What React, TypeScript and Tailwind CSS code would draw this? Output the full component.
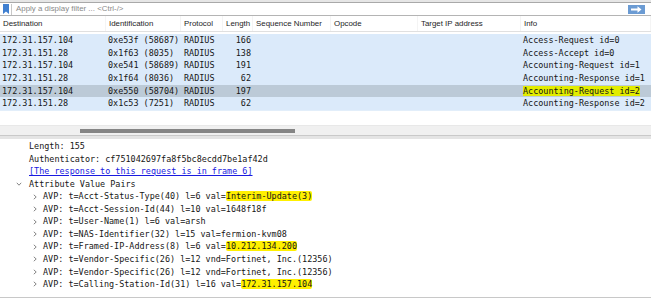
import React from 'react'

type Pkt = { dst: string; ident: string; len: string; info: string; selected?: boolean }

const packets: Pkt[] = [
  { dst: '172.31.157.104', ident: '0xe53f (58687)', len: '166', info: 'Access-Request id=0' },
  { dst: '172.31.151.28', ident: '0x1f63 (8035)', len: '138', info: 'Access-Accept id=0' },
  { dst: '172.31.157.104', ident: '0xe541 (58689)', len: '191', info: 'Accounting-Request id=1' },
  { dst: '172.31.151.28', ident: '0x1f64 (8036)', len: '62', info: 'Accounting-Response id=1' },
  { dst: '172.31.157.104', ident: '0xe550 (58704)', len: '197', info: 'Accounting-Request id=2', selected: true },
  { dst: '172.31.151.28', ident: '0x1c53 (7251)', len: '62', info: 'Accounting-Response id=2' },
]

const cols = 'grid grid-cols-[106px_75px_42px_30px_78px_87px_103px_130px]'
const mono = "font-['DejaVu_Sans_Mono',monospace] text-[8.45px] text-[#161616]"
const ui = "font-['Liberation_Sans',Arial,sans-serif] text-[7.9px] text-[#1e1e1e]"

function Hl({ children }: { children: React.ReactNode }) {
  return <span className="bg-[#fff000] rounded-[2px]">{children}</span>
}

function Chevron({ open }: { open?: boolean }) {
  return (
    <svg width="6" height="6" viewBox="0 0 6 6" className="shrink-0">
      {open ? (
        <path d="M0.8 1.8 L3 4.2 L5.2 1.8" fill="none" stroke="#777" strokeWidth="0.9" />
      ) : (
        <path d="M1.8 0.8 L4.2 3 L1.8 5.2" fill="none" stroke="#777" strokeWidth="0.9" />
      )}
    </svg>
  )
}

function AvpLine({ children }: { children: React.ReactNode }) {
  return (
    <div className="flex h-[12.55px] items-center pl-[32px] gap-[5px]">
      <Chevron />
      <span className="whitespace-pre">{children}</span>
    </div>
  )
}

export default function App() {
  return (
    <div className="w-[651px] h-[298px] overflow-hidden bg-white flex flex-col">
      {/* filter bar */}
      <div className="h-[3px] border-b border-[#a9a9a9] bg-[#e6e6e6]" />
      <div className="h-[13px] flex items-center border-b border-[#b4b4b4] bg-white">
        <svg width="6" height="10" viewBox="0 0 6 10" className="ml-[3px]">
          <path d="M0 0 H6 V10 L3 7.5 L0 10 Z" fill="#3f7fd0" />
        </svg>
        <div className="w-px h-[11px] bg-[#c8c8c8] ml-[2px]" />
        <span className={`${ui} !text-[#8a8a8a] ml-[4px] whitespace-nowrap`}>
          Apply a display filter ... &lt;Ctrl-/&gt;
        </span>
        <div className="ml-auto mr-[6px] w-[17px] h-[9px] bg-[#6b9bd3] flex items-center justify-center">
          <svg width="11" height="7" viewBox="0 0 11 7">
            <path d="M0 2.5 H6.5 V0.3 L10.5 3.5 L6.5 6.7 V4.5 H0 Z" fill="#ffffff" />
          </svg>
        </div>
      </div>

      {/* packet list header */}
      <div className={`${cols} ${ui} h-[16px] items-center border-b border-[#e0e0e0] bg-white`}>
        {['Destination', 'Identification', 'Protocol', 'Length', 'Sequence Number', 'Opcode', 'Target IP address', 'Info'].map(
          (h) => (
            <div key={h} className="pl-[3px] h-full flex items-center border-r border-[#f4f4f4] whitespace-nowrap overflow-hidden">
              {h}
            </div>
          )
        )}
      </div>

      {/* packet rows */}
      <div className="pt-[2px]">
        {packets.map((p, i) => (
          <div
            key={i}
            className={`${cols} ${mono} h-[12.7px] items-center whitespace-pre ${p.selected ? 'bg-[#bccad7]' : 'bg-[#dbeafa]'}`}
          >
            <div className="pl-[2px]">{p.dst}</div>
            <div className="pl-[2px]">{p.ident}</div>
            <div className="pl-[3px]">RADIUS</div>
            <div className="text-right pr-[2px]">{p.len}</div>
            <div />
            <div />
            <div />
            <div className="pl-[2px]">
              {p.selected ? <span className="bg-[#e2ec00]">{p.info}</span> : p.info}
            </div>
          </div>
        ))}
      </div>
      <div className="h-[15px] bg-white border-t border-[#e2eefa]" />

      {/* horizontal scrollbar */}
      <div className="h-[10px] bg-[#f0f0f0] flex items-center border-t border-[#e8e8e8]">
        <div className="ml-[80px] w-[215px] h-[4px] bg-[#858585]" />
      </div>
      <div className="h-[1px] bg-[#c9c9c9]" />
      <div className="h-[3px] bg-[#e4e4e4]" />

      {/* details pane */}
      <div className={`${mono} pt-[1px] flex-1 border-b border-[#c8c8c8]`}>
        <div className="h-[12.55px] flex items-center pl-[29px] whitespace-pre">Length: 155</div>
        <div className="h-[12.55px] flex items-center pl-[29px] whitespace-pre">
          Authenticator: cf751042697fa8f5bc8ecdd7be1af42d
        </div>
        <div className="h-[12.55px] flex items-center pl-[29px] whitespace-pre">
          <span className="text-[#1a1ae0] underline">[The response to this request is in frame 6]</span>
        </div>
        <div className="h-[12.55px] flex items-center pl-[16px] gap-[7px] whitespace-pre">
          <Chevron open />
          <span>Attribute Value Pairs</span>
        </div>
        <AvpLine>
          AVP: t=Acct-Status-Type(40) l=6 val=<Hl>Interim-Update(3)</Hl>
        </AvpLine>
        <AvpLine>AVP: t=Acct-Session-Id(44) l=10 val=1648f18f</AvpLine>
        <AvpLine>AVP: t=User-Name(1) l=6 val=arsh</AvpLine>
        <AvpLine>AVP: t=NAS-Identifier(32) l=15 val=fermion-kvm08</AvpLine>
        <AvpLine>
          AVP: t=Framed-IP-Address(8) l=6 val=<Hl>10.212.134.200</Hl>
        </AvpLine>
        <AvpLine>AVP: t=Vendor-Specific(26) l=12 vnd=Fortinet, Inc.(12356)</AvpLine>
        <AvpLine>AVP: t=Vendor-Specific(26) l=12 vnd=Fortinet, Inc.(12356)</AvpLine>
        <AvpLine>
          AVP: t=Calling-Station-Id(31) l=16 val=<Hl>172.31.157.104</Hl>
        </AvpLine>
      </div>
    </div>
  )
}
